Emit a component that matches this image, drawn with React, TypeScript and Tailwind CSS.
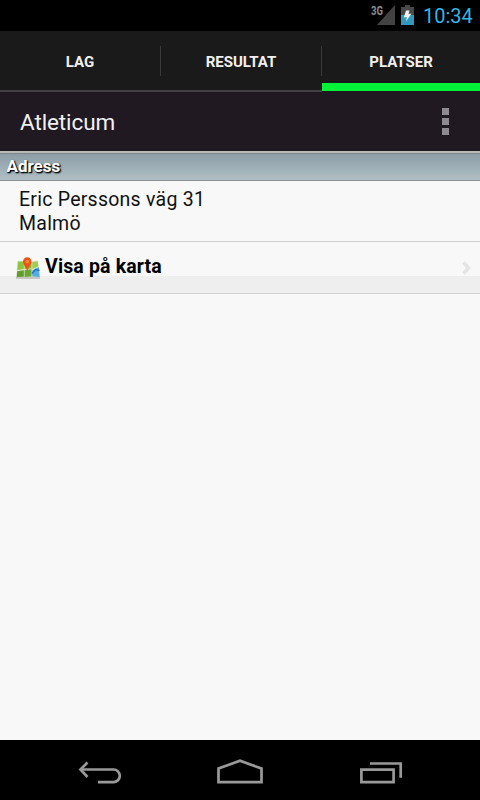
import clsx from 'clsx'

const TABS = ['LAG', 'RESULTAT', 'PLATSER']

function StatusBar() {
  return (
    <div className="flex h-[31px] shrink-0 items-start justify-end bg-black pr-[7px]">
      <svg width="26" height="31" viewBox="0 0 26 31">
        <path d="M25 5v20H7z" fill="#424242" />
        <text x="1" y="14.5" fontSize="12" fontWeight="700" fill="#8c8c8c" textLength="12" lengthAdjust="spacingAndGlyphs">
          3G
        </text>
      </svg>
      <svg width="13" height="31" viewBox="0 0 13 31" className="ml-[5px]">
        <path d="M4 5h5v2h4v8H0V7h4z" fill="#484848" />
        <path d="M0 15h13v10H0z" fill="#3298bd" />
        <path d="M5 10.5h3.5L7.5 14l3-.5L5 21.5l.8-4.5-3 .5z" fill="#f0f4f5" />
      </svg>
      <span className="ml-[9px] w-[50px] whitespace-nowrap text-[20px] leading-[32px] text-[#33b5e5]">10:34</span>
    </div>
  )
}

function TabBar({ active }: { active: string }) {
  return (
    <div className="flex h-[61px] shrink-0 bg-[#1a1a1a]">
      {TABS.map((tab, i) => (
        <div
          key={tab}
          className={clsx(
            'flex flex-col',
            i === 2 ? 'w-[158px]' : 'w-[161px]',
            tab === active ? 'h-[60px] border-b-8 border-[#00f238]' : 'border-b-2 border-[#434145]'
          )}
        >
          <div className="flex items-start">
            <span className="flex-1 pt-[20px] text-center text-[15px] leading-[22px] font-bold text-[#f0f0f0]">{tab}</span>
            {i < 2 && <span className="mt-[15px] h-[30px] w-px bg-[#3a3a3a]" />}
          </div>
        </div>
      ))}
    </div>
  )
}

function ActionBar() {
  return (
    <div className="flex h-[59px] shrink-0 items-center justify-between bg-[#201921] pr-[31px] pl-[20px]">
      <h1 className="text-[22.5px] leading-[30px] tracking-[-0.1px] text-[#f0f0f0]">Atleticum</h1>
      <div className="flex flex-col gap-[3px]">
        <span className="size-[7px] bg-[#8f8992]" />
        <span className="size-[7px] bg-[#8f8992]" />
        <span className="size-[7px] bg-[#8f8992]" />
      </div>
    </div>
  )
}

function MapIcon() {
  return (
    <svg width="24" height="23" viewBox="0 0 24 23" className="shrink-0">
      <path d="M1.5 4L8 4l7 .5 7-1L24 21l-8-.5-8 .5-8-.5z" fill="#dfe6cc" />
      <path d="M2 4.5h5.8V12l-6.5 1z" fill="#8cc63f" />
      <path d="M8.6 4.5L15.5 5v6.5l-6.900.5z" fill="#86be38" />
      <path d="M16.3 5l5.4-.8.7 5-6.1 2.8z" fill="#a1cc50" />
      <path d="M1.2 14.2l6.6-1v6.600l-7.1.2z" fill="#5f9e2b" />
      <path d="M8.6 13.2l6.9-1v7.300l-6.900.4z" fill="#69a732" />
      <path d="M16.3 13.5l6.4-3.5 1 10-7.400-.5z" fill="#55aaea" />
      <path d="M16 16.5l3.5-4 4 1" stroke="#2471bd" strokeWidth="1.5" fill="none" />
      <path d="M0 21h24" stroke="#a1a49b" fill="none" />
      <path d="M11.3 0.3C8.8.3 7 2.2 7 4.7c0 3 3.2 5.2 4.3 9.8.9-4.6 4.2-6.8 4.2-9.8C15.5 2.2 13.7.3 11.3.3z" fill="#ed5518" />
      <circle cx="11.3" cy="4.5" r="1.8" fill="#f98b3c" />
    </svg>
  )
}

function NavBar() {
  return (
    <div className="flex h-[60px] shrink-0 items-start bg-black pt-[12px] pl-[78px]">
      <svg width="44" height="32" viewBox="0 0 44 32" fill="none" stroke="#999" strokeWidth="2.7">
        <path d="M3 17.5h32.5a6.3 6.3 0 0 1 0 12.6H20" />
        <path d="M9.5 10.5L2.5 17.5l7 7.500" />
      </svg>
      <svg width="48" height="32" viewBox="0 0 48 32" fill="none" stroke="#999" strokeWidth="2.7" className="ml-[94px]">
        <path d="M2.5 30.2V16.5L24 8.8l21.5 7.7v13.7z" />
      </svg>
      <svg width="46" height="32" viewBox="0 0 46 32" fill="none" stroke="#999" strokeWidth="2.7" className="ml-[95px]">
        <path d="M2.4 17.7h32.200v12.5H2.4z" />
        <path d="M11 11.5h30.7v14.3" />
      </svg>
    </div>
  )
}

export default function App() {
  return (
    <div className="flex h-[800px] w-[480px] flex-col overflow-hidden bg-[#f8f8f8] font-[Roboto,sans-serif]">
      <StatusBar />
      <TabBar active="PLATSER" />
      <ActionBar />

      <main className="flex-1">
        <div className="h-[30px] border-t-2 border-b border-t-[#b9b9b5] border-b-[#8b9196] bg-linear-to-b from-[#8b9ca6] to-[#b0bfc5] pl-[6.5px] shadow-[inset_0_1px_0_#7c868c]">
          <h2 className="text-[17px] leading-[27px] font-bold text-white [text-shadow:1px_1px_1px_#000,1px_1px_2px_#000]">Adress</h2>
        </div>
        <div className="h-[61px] border-b border-[#cfcfcf] pt-[7px] pl-[19px] text-[19.5px] leading-[24px] tracking-[0.25px] text-[#111]">
          <p>Eric Perssons väg 31</p>
          <p>Malmö</p>
        </div>
        <div className="flex h-[52px] items-start border-b border-[#d2d2d2] bg-linear-to-b from-[#f8f8f8] from-[34px] to-[#eeeeee] to-[34px] pr-[9px] pl-[16px]">
          <div className="pt-[15px]">
            <MapIcon />
          </div>
          <span className="flex-1 pt-[13px] pl-[5px] text-[19.5px] leading-[24px] font-bold tracking-[0.15px] text-black">Visa på karta</span>
          <svg width="9" height="14" viewBox="0 0 9 14" className="mt-[19px]">
            <path d="M1.5 1.5L6.5 7l-5 5.5" fill="none" stroke="#e4e4e4" strokeWidth="3.5" />
          </svg>
        </div>
      </main>

      <NavBar />
    </div>
  )
}
